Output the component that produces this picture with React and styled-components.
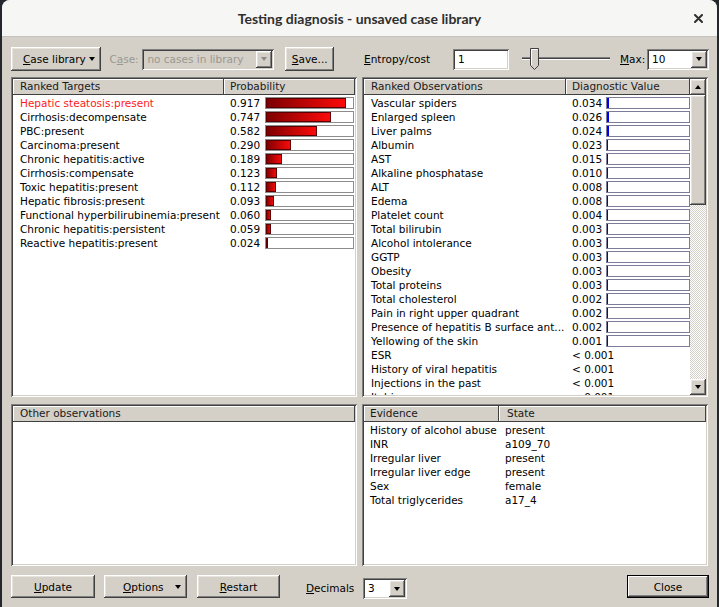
import React from 'react';
import styled, { createGlobalStyle, css } from 'styled-components';

const GlobalStyle = createGlobalStyle`
  html, body {
    margin: 0;
    padding: 0;
    background: #24272b;
  }
  body {
    font-family: "DejaVu Sans", Verdana, sans-serif;
    font-size: 10.5px;
    color: #000;
  }
  * { box-sizing: border-box; }
`;

const raised = css`
  background: #d4d0c8;
  box-shadow: inset -1px -1px #404040, inset 1px 1px #ffffff,
    inset -2px -2px #808080, inset 2px 2px #e6e3de;
`;

const sunken = css`
  box-shadow: inset 1px 1px #808080, inset -1px -1px #ffffff,
    inset 2px 2px #404040, inset -2px -2px #d4d0c8;
`;

const Window = styled.div`
  width: 715px;
  height: 607px;
  margin-left: 2px;
  background: #d4d0c8;
  border-radius: 8px 8px 0 0;
  display: flex;
  flex-direction: column;
  overflow: hidden;
`;

const TitleBar = styled.div`
  height: 37px;
  flex: none;
  display: grid;
  grid-template-columns: 1fr auto 1fr;
  align-items: center;
  background: #f6f6f5;
  border-bottom: 1px solid #c4c2bd;
  h1 {
    margin: 0;
    font: bold 14px Lato, "Liberation Sans", sans-serif;
    color: #2f2f2f;
  }
`;

const CloseX = styled.div`
  justify-self: end;
  padding-right: 14px;
  display: flex;
`;

const Body = styled.div`
  flex: 1;
  padding: 10px 8px 0 9px;
  display: flex;
  flex-direction: column;
`;

const Toolbar = styled.div`
  display: flex;
  align-items: center;
  height: 24px;
`;

const Button = styled.button`
  ${raised};
  border: none;
  margin: 0;
  height: ${(p) => p.$h || 24}px;
  width: ${(p) => p.$w}px;
  margin-left: ${(p) => p.$ml || 0}px;
  font: inherit;
  color: #000;
  display: flex;
  align-items: center;
  justify-content: ${(p) => (p.$menu ? 'space-between' : 'center')};
  padding: ${(p) => (p.$menu ? '0 6px 0 12px' : '0')};
  ${(p) =>
    p.$default &&
    css`
      box-shadow: inset 0 0 0 1px #000, inset -2px -2px #404040,
        inset 2px 2px #ffffff, inset -3px -3px #808080;
      margin-left: auto;
    `}
`;

const Arrow = styled.span`
  width: 0;
  height: 0;
  border-left: 3.5px solid transparent;
  border-right: 3.5px solid transparent;
  ${(p) =>
    p.$up
      ? css`border-bottom: 4px solid ${p.$dim ? '#8a8a8a' : '#000'};`
      : css`border-top: 4px solid ${p.$dim ? '#8a8a8a' : '#000'};`}
`;

const Label = styled.span`
  color: ${(p) => (p.$disabled ? '#9a9890' : '#000')};
  margin-left: ${(p) => p.$ml || 0}px;
  width: ${(p) => (p.$w ? `${p.$w}px` : 'auto')};
  flex: none;
  white-space: nowrap;
`;

const Combo = styled.div`
  ${sunken};
  width: ${(p) => p.$w}px;
  height: 21px;
  flex: none;
  margin-left: ${(p) => p.$ml || 0}px;
  margin-top: ${(p) => p.$mt || 0}px;
  padding: 2px;
  display: flex;
  align-items: stretch;
  background: ${(p) => (p.$disabled ? '#d4d0c8' : '#fff')};
  color: ${(p) => (p.$disabled ? '#9a9890' : '#000')};
  span.value {
    flex: 1;
    padding-left: 3px;
    line-height: 17px;
    white-space: nowrap;
    overflow: hidden;
  }
`;

const ComboButton = styled.div`
  ${raised};
  width: 16px;
  flex: none;
  display: flex;
  align-items: center;
  justify-content: center;
`;

const TextInput = styled.div`
  ${sunken};
  width: 56px;
  height: 21px;
  flex: none;
  background: #fff;
  padding: 0 5px;
  line-height: 21px;
`;

const SliderBox = styled.div`
  width: 90px;
  height: 24px;
  margin-left: 12px;
  flex: none;
  display: flex;
`;

const Grid = styled.div`
  margin-top: 6px;
  display: grid;
  grid-template-columns: 346px 346px;
  grid-template-rows: 320px 162px;
  column-gap: 5px;
  row-gap: 7px;
`;

const Panel = styled.div`
  ${sunken};
  background: #fff;
  padding: 2px;
  display: flex;
  overflow: hidden;
`;

const ListCol = styled.div`
  flex: 1;
  display: flex;
  flex-direction: column;
  overflow: hidden;
`;

const HeaderRow = styled.div`
  display: flex;
  height: 16px;
  flex: none;
`;

const HeaderCell = styled.div`
  ${raised};
  box-shadow: inset -1px -1px #404040, inset 1px 1px #ffffff;
  width: ${(p) => (p.$w ? `${p.$w}px` : 'auto')};
  flex: ${(p) => (p.$w ? 'none' : '1')};
  padding-left: ${(p) => p.$pl || 6}px;
  line-height: 15px;
  white-space: nowrap;
  color: #1a1a1a;
`;

const Rows = styled.div`
  padding-top: 1px;
`;

const Row = styled.div`
  display: flex;
  align-items: center;
  height: 14px;
  line-height: 14px;
  color: #000;
`;

const Cell = styled.div`
  width: ${(p) => p.$w}px;
  flex: none;
  padding-left: ${(p) => p.$pl || 0}px;
  white-space: nowrap;
  overflow: ${(p) => (p.$free ? 'visible' : 'hidden')};
  color: ${(p) => (p.$hot ? '#ff1a1a' : 'inherit')};
`;

const Bar = styled.div`
  width: ${(p) => p.$w}px;
  height: 12px;
  flex: none;
  border: 1px solid ${(p) => (p.$blue ? '#7c7c98' : '#8c8c8c')};
  background: #fff;
  display: flex;
`;

const RedFill = styled.div`
  height: 100%;
  background: linear-gradient(to right, #7a0000, #ff0a0a);
  box-shadow: inset 0 0 0 1px #5a0000;
`;

const BlueFill = styled.div`
  height: 100%;
  background: #0000f0;
`;

const ScrollBar = styled.div`
  width: 16px;
  flex: none;
  display: flex;
  flex-direction: column;
  background: repeating-conic-gradient(#d4d0c8 0 25%, #ffffff 0 50%) 0 0 / 2px 2px;
`;

const ScrollButton = styled.div`
  ${raised};
  height: ${(p) => p.$h || 16}px;
  flex: none;
  display: flex;
  align-items: center;
  justify-content: center;
  margin-top: ${(p) => (p.$bottom ? 'auto' : '0')};
`;

const Footer = styled.div`
  margin-top: 9px;
  display: flex;
  align-items: flex-start;
`;

const Key = ({ children }) => <u>{children}</u>;

const targets = [
  ['Hepatic steatosis:present', 0.917],
  ['Cirrhosis:decompensate', 0.747],
  ['PBC:present', 0.582],
  ['Carcinoma:present', 0.29],
  ['Chronic hepatitis:active', 0.189],
  ['Cirrhosis:compensate', 0.123],
  ['Toxic hepatitis:present', 0.112],
  ['Hepatic fibrosis:present', 0.093],
  ['Functional hyperbilirubinemia:present', 0.06],
  ['Chronic hepatitis:persistent', 0.059],
  ['Reactive hepatitis:present', 0.024],
];

const observations = [
  ['Vascular spiders', 0.034],
  ['Enlarged spleen', 0.026],
  ['Liver palms', 0.024],
  ['Albumin', 0.023],
  ['AST', 0.015],
  ['Alkaline phosphatase', 0.01],
  ['ALT', 0.008],
  ['Edema', 0.008],
  ['Platelet count', 0.004],
  ['Total bilirubin', 0.003],
  ['Alcohol intolerance', 0.003],
  ['GGTP', 0.003],
  ['Obesity', 0.003],
  ['Total proteins', 0.003],
  ['Total cholesterol', 0.002],
  ['Pain in right upper quadrant', 0.002],
  ['Presence of hepatitis B surface ant...', 0.002],
  ['Yellowing of the skin', 0.001],
  ['ESR', 0],
  ['History of viral hepatitis', 0],
  ['Injections in the past', 0],
  ['Itching', 0],
];

const evidence = [
  ['History of alcohol abuse', 'present'],
  ['INR', 'a109_70'],
  ['Irregular liver', 'present'],
  ['Irregular liver edge', 'present'],
  ['Sex', 'female'],
  ['Total triglycerides', 'a17_4'],
];

const Slider = () => (
  <SliderBox>
    <svg width="90" height="24" viewBox="0 0 90 24">
      <line x1="1" y1="10.5" x2="89" y2="10.5" stroke="#808080" />
      <line x1="1" y1="11.5" x2="89" y2="11.5" stroke="#404040" />
      <line x1="1" y1="12.5" x2="89" y2="12.5" stroke="#ffffff" />
      <polygon points="9.5,1.5 17.5,1.5 17.5,18.5 13.5,22.5 9.5,18.5" fill="#d4d0c8" stroke="#404040" />
      <polyline points="10.5,18 10.5,2.5 16.5,2.5" fill="none" stroke="#ffffff" />
    </svg>
  </SliderBox>
);

const App = () => {
  return (
    <>
      <GlobalStyle />
      <Window>
        <TitleBar>
          <span />
          <h1>Testing diagnosis - unsaved case library</h1>
          <CloseX>
            <svg width="9" height="9" viewBox="0 0 9 9">
              <path d="M1 1 L8 8 M8 1 L1 8" stroke="#2f2f2f" strokeWidth="2" strokeLinecap="round" />
            </svg>
          </CloseX>
        </TitleBar>
        <Body>
          <Toolbar>
            <Button $w={91} $menu>
              <span><Key>C</Key>ase library</span>
              <Arrow />
            </Button>
            <Label $disabled $ml={8} $w={33}>C<Key>a</Key>se:</Label>
            <Combo $w={132} $disabled>
              <span className="value">no cases in library</span>
              <ComboButton><Arrow $dim /></ComboButton>
            </Combo>
            <Button $w={49} $ml={11}><span><Key>S</Key>ave...</span></Button>
            <Label $ml={30} $w={89}><Key>E</Key>ntropy/cost</Label>
            <TextInput>1</TextInput>
            <Slider />
            <Label $ml={9} $w={27}><Key>M</Key>ax:</Label>
            <Combo $w={62}>
              <span className="value">10</span>
              <ComboButton><Arrow /></ComboButton>
            </Combo>
          </Toolbar>

          <Grid>
            <Panel>
              <ListCol>
                <HeaderRow>
                  <HeaderCell $w={211} $pl={7}>Ranked Targets</HeaderCell>
                  <HeaderCell>Probability</HeaderCell>
                </HeaderRow>
                <Rows>
                  {targets.map(([name, p], i) => (
                    <Row key={name}>
                      <Cell $w={211} $pl={7} $hot={i === 0}>{name}</Cell>
                      <Cell $w={41} $pl={6}>{p.toFixed(3)}</Cell>
                      <Bar $w={89}>
                        <RedFill style={{ width: `${p * 100}%` }} />
                      </Bar>
                    </Row>
                  ))}
                </Rows>
              </ListCol>
            </Panel>

            <Panel>
              <ListCol>
                <HeaderRow>
                  <HeaderCell $w={202} $pl={7}>Ranked Observations</HeaderCell>
                  <HeaderCell>Diagnostic Value</HeaderCell>
                </HeaderRow>
                <Rows>
                  {observations.map(([name, v]) => (
                    <Row key={name}>
                      <Cell $w={202} $pl={7}>{name}</Cell>
                      {v > 0 ? (
                        <>
                          <Cell $w={40} $pl={6}>{v.toFixed(3)}</Cell>
                          <Bar $w={84} $blue>
                            <BlueFill style={{ width: `${Math.max(1, Math.floor(v * 84))}px` }} />
                          </Bar>
                        </>
                      ) : (
                        <Cell $w={124} $pl={6} $free>&lt; 0.001</Cell>
                      )}
                    </Row>
                  ))}
                </Rows>
              </ListCol>
              <ScrollBar>
                <ScrollButton><Arrow $up /></ScrollButton>
                <ScrollButton $h={110} />
                <ScrollButton $bottom><Arrow /></ScrollButton>
              </ScrollBar>
            </Panel>

            <Panel>
              <ListCol>
                <HeaderRow>
                  <HeaderCell $pl={7}>Other observations</HeaderCell>
                </HeaderRow>
              </ListCol>
            </Panel>

            <Panel>
              <ListCol>
                <HeaderRow>
                  <HeaderCell $w={135} $pl={6}>Evidence</HeaderCell>
                  <HeaderCell $pl={8}>State</HeaderCell>
                </HeaderRow>
                <Rows>
                  {evidence.map(([name, state]) => (
                    <Row key={name}>
                      <Cell $w={135} $pl={6}>{name}</Cell>
                      <Cell $w={150} $pl={6}>{state}</Cell>
                    </Row>
                  ))}
                </Rows>
              </ListCol>
            </Panel>
          </Grid>

          <Footer>
            <Button $w={84} $h={23}><span><Key>U</Key>pdate</span></Button>
            <Button $w={83} $h={23} $ml={9} $menu style={{ paddingLeft: 19 }}>
              <span><Key>O</Key>ptions</span>
              <Arrow />
            </Button>
            <Button $w={83} $h={23} $ml={10}><span><Key>R</Key>estart</span></Button>
            <Label $ml={26} $w={57} style={{ lineHeight: '26px' }}><Key>D</Key>ecimals</Label>
            <Combo $w={44} $mt={3}>
              <span className="value">3</span>
              <ComboButton><Arrow /></ComboButton>
            </Combo>
            <Button $w={82} $h={23} $default>Close</Button>
          </Footer>
        </Body>
      </Window>
    </>
  );
};

export default App;
